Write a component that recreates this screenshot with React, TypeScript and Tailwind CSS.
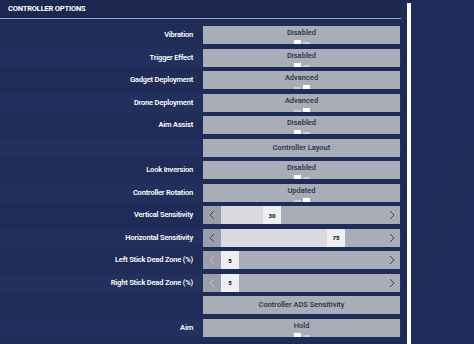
import React from 'react'

type Row =
  | { label: string; kind: 'toggle'; value: string; on: 'left' | 'right' }
  | { label: string; kind: 'button'; value: string }
  | { label: string; kind: 'slider'; value: string; fill: number; dim?: boolean }

const ROWS: Row[] = [
  { label: 'Vibration', kind: 'toggle', value: 'Disabled', on: 'left' },
  { label: 'Trigger Effect', kind: 'toggle', value: 'Disabled', on: 'left' },
  { label: 'Gadget Deployment', kind: 'toggle', value: 'Advanced', on: 'right' },
  { label: 'Drone Deployment', kind: 'toggle', value: 'Advanced', on: 'right' },
  { label: 'Aim Assist', kind: 'toggle', value: 'Disabled', on: 'left' },
  { label: '', kind: 'button', value: 'Controller Layout' },
  { label: 'Look Inversion', kind: 'toggle', value: 'Disabled', on: 'left' },
  { label: 'Controller Rotation', kind: 'toggle', value: 'Updated', on: 'right' },
  { label: 'Vertical Sensitivity', kind: 'slider', value: '30', fill: 60 },
  { label: 'Horizontal Sensitivity', kind: 'slider', value: '75', fill: 124 },
  { label: 'Left Stick Dead Zone (%)', kind: 'slider', value: '5', fill: 18, dim: true },
  { label: 'Right Stick Dead Zone (%)', kind: 'slider', value: '5', fill: 18, dim: true },
  { label: '', kind: 'button', value: 'Controller ADS Sensitivity' },
  { label: 'Aim', kind: 'toggle', value: 'Hold', on: 'left' },
]

function Chevron({ dir, dim }: { dir: 'left' | 'right'; dim?: boolean }) {
  return (
    <svg width="6" height="10" viewBox="0 0 6 10" className={dim ? 'text-[#c3c6ce]' : 'text-[#434858]'}>
      <path
        d={dir === 'left' ? 'M5 1 L1 5 L5 9' : 'M1 1 L5 5 L1 9'}
        fill="none"
        stroke="currentColor"
        strokeWidth="1"
      />
    </svg>
  )
}

function Control({ row }: { row: Row }) {
  if (row.kind === 'slider') {
    return (
      <div className="flex h-full w-full bg-[#a9adb8]">
        <div className="flex w-[18px] items-center justify-center bg-[#9b9fab]">
          <Chevron dir="left" dim={row.dim} />
        </div>
        <div className="flex h-full justify-end bg-[#dadbe0]" style={{ width: row.fill }}>
          <div className="flex w-[18px] items-center justify-center bg-[#efeff1] text-[6px] font-bold text-black">
            {row.value}
          </div>
        </div>
        <div className="flex flex-1 items-center justify-end pr-[5px]">
          <Chevron dir="right" />
        </div>
      </div>
    )
  }
  if (row.kind === 'button') {
    return (
      <div className="flex h-full w-full items-center justify-center bg-[#a9adb8] text-[7.5px] font-medium text-[#2a2f3e]">
        {row.value}
      </div>
    )
  }
  return (
    <div className="relative flex h-full w-full flex-col items-center bg-[#a9adb8] pt-[2px]">
      <span className="text-[7.5px] leading-[10px] font-medium text-[#2a2f3e]">{row.value}</span>
      <div className="absolute bottom-0 flex items-end gap-[2px]">
        <div className={row.on === 'left' ? 'h-[4px] w-[7px] bg-white' : 'h-[2px] w-[7px] bg-[#cdd0d7]'} />
        <div className={row.on === 'right' ? 'h-[4px] w-[7px] bg-white' : 'h-[2px] w-[7px] bg-[#cdd0d7]'} />
      </div>
    </div>
  )
}

export default function App() {
  return (
    <div
      className="flex h-[344px] w-[474px] overflow-hidden bg-[#1f2c57] text-white"
      style={{ fontFamily: 'Roboto, "Liberation Sans", sans-serif' }}
    >
      <div className="flex w-[401px] flex-col">
        <div className="flex h-[19px] items-center border-b border-[#97a5c6] bg-[#1c2750] pl-[8px] text-[7.5px] font-bold tracking-tight">
          CONTROLLER OPTIONS
        </div>
        <div className="flex flex-col gap-[4.5px] pt-[7px]">
          {ROWS.map((row, i) => (
            <div key={i} className={`flex h-[18px] ${i % 2 === 1 ? 'bg-[#25366570]' : ''}`}>
              <div className="flex w-[203px] items-center justify-end pr-[10px] text-[7.5px] font-semibold tracking-tight">
                {row.label}
              </div>
              <div className="w-[197px]">
                <Control row={row} />
              </div>
            </div>
          ))}
        </div>
      </div>
      <div className="ml-[6px] mt-[3px] w-[4px] bg-white" />
      <div className="flex-1 bg-[linear-gradient(115deg,#1f2c59_0%,#1f2c59_56%,#23326320_60%,#1f2c59_64%,#1f2c59_100%)]" />
    </div>
  )
}
